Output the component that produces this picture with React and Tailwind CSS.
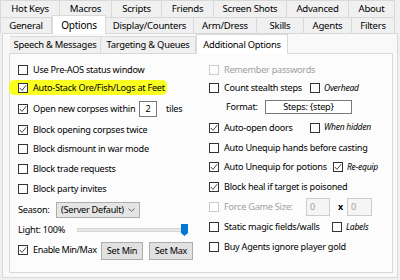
import React from 'react';

const Check = ({ checked, disabled }) => (
  <span
    className={`flex items-center justify-center w-[10px] h-[10px] shrink-0 border bg-white ${
      disabled ? 'border-[#cccccc]' : 'border-[#333333]'
    }`}
  >
    {checked && (
      <svg width="8" height="8" viewBox="0 0 8 8">
        <polyline points="0.8,4 3,6.4 7.2,1.2" fill="none" stroke="#333" strokeWidth="0.9" />
      </svg>
    )}
  </span>
);

// labelW keeps the next control at the same x as in the dialog
const CheckRow = ({ label, checked, disabled, h, labelW, tight, children }) => (
  <div className="flex items-center" style={{ height: h }}>
    <Check checked={checked} disabled={disabled} />
    <span
      className={`ml-[5px] whitespace-nowrap shrink-0 ${tight ? 'tracking-[-0.4px]' : ''} ${disabled ? 'text-[#a0a0a0]' : 'text-black'}`}
      style={labelW ? { width: labelW } : undefined}
    >
      {label}
    </span>
    {children}
  </div>
);

const SubCheck = ({ label, checked }) => (
  <div className="flex items-center">
    <Check checked={checked} />
    <span className="ml-[4px] italic text-[8.5px] whitespace-nowrap">{label}</span>
  </div>
);

const Tab = ({ label, w, first }) => (
  <div
    className={`flex items-center justify-center h-full bg-[#f0f0f0] border-t border-r border-[#d9d9d9] ${first ? 'border-l' : ''}`}
    style={{ width: w }}
  >
    {label}
  </div>
);

export default function App() {
  return (
    <div className="w-[400px] h-[280px] overflow-hidden bg-[#f0f0f0] text-[9.15px] tracking-[-0.25px] leading-none text-black font-['Noto_Sans',sans-serif]">
      {/* top tab rows */}
      <div className="flex h-[17px] text-[9.6px]">
        <Tab label="Hot Keys" w={60} first />
        <Tab label="Macros" w={52} />
        <Tab label="Scripts" w={50} />
        <Tab label="Friends" w={52} />
        <Tab label="Screen Shots" w={73} />
        <Tab label="Advanced" w={62} />
        <Tab label="About" w={46} />
      </div>
      <div className="flex h-[16px] relative z-10 text-[9.6px]">
        <Tab label="General" w={52} first />
        <div className="flex items-center justify-center w-[54px] h-[19px] -mt-[2px] bg-white border-t border-x border-[#d9d9d9] text-[10px]">
          Options
        </div>
        <Tab label="Display/Counters" w={88} />
        <Tab label="Arm/Dress" w={63} />
        <Tab label="Skills" w={47} />
        <Tab label="Agents" w={48} />
        <Tab label="Filters" w={43} />
      </div>

      {/* outer page */}
      <div className="ml-[2px] w-[396px] h-[245px] border border-[#d9d9d9] bg-[#f9f9f9] pt-[2px] pl-[6px]">
        <div className="flex h-[17px] ml-[1px] relative z-10 text-[9.4px]">
          <Tab label="Speech & Messages" w={91} />
          <Tab label="Targeting & Queues" w={95} />
          <div className="flex items-center justify-center w-[92px] h-[20px] -mt-[2px] bg-white border-t border-x border-[#d9d9d9]">
            Additional Options
          </div>
        </div>

        <div className="w-[384px] h-[220px] border border-[#d9d9d9] bg-[#fcfcfc] pt-[7px] pl-[8px] flex">
          {/* left column */}
          <div className="w-[191px] flex flex-col">
            <CheckRow label="Use Pre-AOS status window" h={18} />
            <div className="relative flex items-center h-[18px]">
              <span className="absolute -left-[9px] top-[1px] w-[158px] h-[15px] rounded-[5px] bg-[#fbff1f] blur-[0.6px]" />
              <div className="relative flex items-center">
                <Check checked />
                <span className="ml-[5px] whitespace-nowrap">Auto-Stack Ore/Fish/Logs at Feet</span>
              </div>
            </div>
            <CheckRow label="Open new corpses within" checked h={23} labelW={106}>
              <span className="w-[18px] h-[16px] flex items-center justify-center bg-white border border-[#7a7a7a]">2</span>
              <span className="ml-[9px]">tiles</span>
            </CheckRow>
            <CheckRow label="Block opening corpses twice" checked h={19} />
            <CheckRow label="Block dismount in war mode" h={20} />
            <CheckRow label="Block trade requests" h={20} />
            <CheckRow label="Block party invites" h={20} />
            <div className="flex items-center h-[21px]">
              <span className="w-[38px]">Season:</span>
              <div className="w-[84px] h-[16px] flex items-center justify-between px-[4px] bg-[#e5e5e5] border border-[#adadad] whitespace-nowrap">
                <span>(Server Default)</span>
                <svg width="7" height="4" viewBox="0 0 7 4">
                  <polyline points="0.5,0.5 3.5,3.3 6.5,0.5" fill="none" stroke="#555" strokeWidth="0.9" />
                </svg>
              </div>
            </div>
            <div className="flex items-center h-[19px]">
              <span className="w-[59px]">Light: 100%</span>
              <div className="relative w-[111px] h-[12px] flex items-center">
                <div className="w-full h-[4px] bg-[#e7e7e7] border border-[#d6d6d6]" />
                <svg className="absolute right-0 top-0" width="7" height="12" viewBox="0 0 7 12">
                  <path d="M0 0 H7 V9 L3.5 12 L0 9 Z" fill="#0078d7" />
                </svg>
              </div>
            </div>
            <CheckRow label="Enable Min/Max" checked h={21} labelW={68} tight>
              <button className="w-[42px] h-[18px] mt-[2px] flex items-center justify-center bg-[#e1e1e1] border border-[#adadad]">Set Min</button>
              <button className="ml-[6px] w-[44px] h-[18px] mt-[2px] flex items-center justify-center bg-[#e1e1e1] border border-[#adadad]">Set Max</button>
            </CheckRow>
          </div>

          {/* right column */}
          <div className="flex flex-col">
            <CheckRow label="Remember passwords" disabled h={18} />
            <CheckRow label="Count stealth steps" h={18} labelW={86}>
              <SubCheck label="Overhead" />
            </CheckRow>
            <div className="flex items-center h-[20px]">
              <span className="ml-[17px] w-[39px]">Format:</span>
              <div className="w-[87px] h-[14px] flex items-center justify-center bg-white border border-[#7a7a7a]">Steps: {'{step}'}</div>
            </div>
            <CheckRow label="Auto-open doors" checked h={21} labelW={86}>
              <SubCheck label="When hidden" />
            </CheckRow>
            <CheckRow label="Auto Unequip hands before casting" h={19} />
            <CheckRow label="Auto Unequip for potions" checked h={20} labelW={109}>
              <SubCheck label="Re-equip" checked />
            </CheckRow>
            <CheckRow label="Block heal if target is poisoned" checked h={19} />
            <CheckRow label="Force Game Size:" disabled h={21} labelW={82}>
              <span className="w-[24px] h-[18px] flex items-center pl-[3px] text-[#a0a0a0] bg-[#f5f5f5] border border-[#cccccc]">0</span>
              <span className="ml-[8px] font-bold text-[9px]">x</span>
              <span className="ml-[4px] w-[25px] h-[18px] flex items-center pl-[3px] text-[#a0a0a0] bg-[#f5f5f5] border border-[#cccccc]">0</span>
            </CheckRow>
            <CheckRow label="Static magic fields/walls" h={20} labelW={108}>
              <SubCheck label="Labels" />
            </CheckRow>
            <CheckRow label="Buy Agents ignore player gold" h={19} />
          </div>
        </div>
      </div>
    </div>
  );
}
